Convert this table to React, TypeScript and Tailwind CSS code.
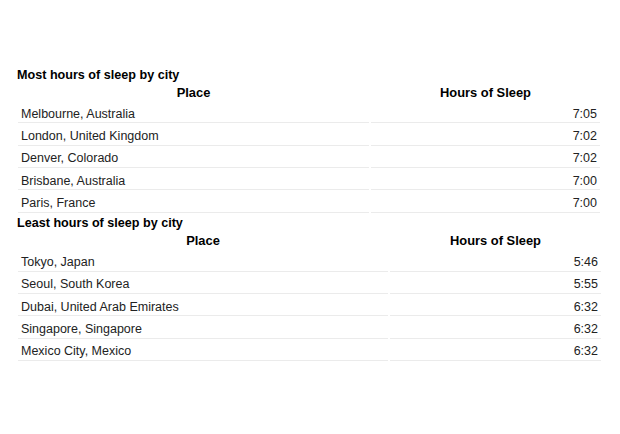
import React from "react";

type Row = [string, string];

const most: Row[] = [
  ["Melbourne, Australia", "7:05"],
  ["London, United Kingdom", "7:02"],
  ["Denver, Colorado", "7:02"],
  ["Brisbane, Australia", "7:00"],
  ["Paris, France", "7:00"],
];

const least: Row[] = [
  ["Tokyo, Japan", "5:46"],
  ["Seoul, South Korea", "5:55"],
  ["Dubai, United Arab Emirates", "6:32"],
  ["Singapore, Singapore", "6:32"],
  ["Mexico City, Mexico", "6:32"],
];

function Table({ title, rows, cols, topGap }: { title: string; rows: Row[]; cols: string; topGap: string }) {
  return (
    <div className={topGap}>
      <div className="h-[14px] leading-[14px] text-[12.6px] font-bold text-black pl-[17px]">{title}</div>
      <div className={`grid ${cols} gap-x-[2px] mt-[2px] pl-[18px]`}>
        <div className="h-[17px] leading-[17px] text-center text-[12.9px] font-bold text-black">Place</div>
        <div className="h-[17px] leading-[17px] text-center text-[12.9px] font-bold text-black">Hours of Sleep</div>
        {rows.map(([p, h]) => (
          <React.Fragment key={p}>
            <div className="h-[22.33px] flex items-center pt-[5px] pl-[3px] border-b border-[#ebebeb] text-[12.5px] text-[#222]">{p}</div>
            <div className="h-[22.33px] flex items-center justify-end pt-[5px] pr-[3px] border-b border-[#ebebeb] text-[12.5px] text-[#222]">{h}</div>
          </React.Fragment>
        ))}
      </div>
    </div>
  );
}

export default function App() {
  return (
    <div className="w-[620px] h-[434px] bg-white pt-[68px]" style={{ fontFamily: '"Liberation Sans", Arial, sans-serif' }}>
      <Table title="Most hours of sleep by city" rows={most} cols="grid-cols-[351px_229px]" topGap="" />
      <Table title="Least hours of sleep by city" rows={least} cols="grid-cols-[370px_211px]" topGap="mt-[3.67px]" />
    </div>
  );
}
